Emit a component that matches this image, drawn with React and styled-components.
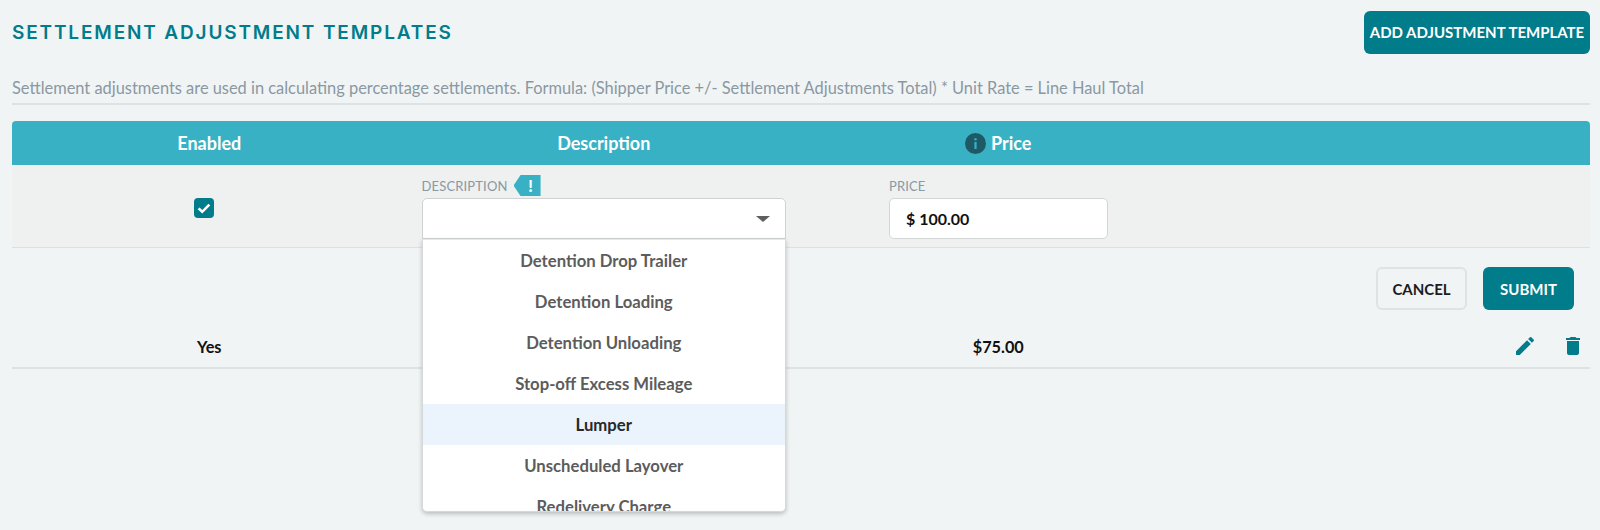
import React from 'react';
import styled, { createGlobalStyle } from 'styled-components';
import { MdEdit, MdDelete } from 'react-icons/md';

const GlobalStyle = createGlobalStyle`
    html, body {
        margin: 0;
        background: #f0f4f5;
        font-family: "Lato", "Liberation Sans", sans-serif;
    }
`;

const Page = styled.div`
    box-sizing: border-box;
    width: 1600px;
    height: 530px;
    overflow: hidden;
    padding: 10px 10px 0 12px;
`;

const TitleRow = styled.div`
    display: flex;
    justify-content: space-between;
    align-items: center;
    height: 44px;
`;

const Title = styled.h1`
    margin: 0;
    font-family: "Inter", "Liberation Sans", sans-serif;
    font-size: 19px;
    font-weight: 600;
    letter-spacing: 1.85px;
    color: #007c8a;
`;

const Button = styled.button`
    box-sizing: border-box;
    height: 43px;
    border-radius: 6px;
    font-family: "Lato", "Liberation Sans", sans-serif;
    font-size: 15px;
    font-weight: 700;
    cursor: pointer;
    border: ${(p) => (p.$ghost ? '2px solid #dfe3e4' : '0')};
    background: ${(p) => (p.$ghost ? '#f0f4f5' : '#007c8a')};
    color: ${(p) => (p.$ghost ? '#1c1c1c' : '#fff')};
    width: ${(p) => p.$width || 91}px;
    padding: 0;
`;

const Intro = styled.p`
    margin: 22px 0 0;
    height: 27px;
    font-size: 16.4px;
    line-height: 24px;
    color: #8a98a2;
    border-bottom: 2px solid #dde2e4;
`;

const Table = styled.div`
    margin-top: 16px;
`;

const Columns = styled.div`
    display: grid;
    grid-template-columns: repeat(4, 1fr);
`;

const HeadRow = styled(Columns)`
    height: 44px;
    align-items: center;
    background: #38b1c4;
    border-radius: 4px 4px 0 0;
`;

const HeadCell = styled.div`
    display: flex;
    justify-content: center;
    align-items: center;
    gap: 5px;
    font-size: 18px;
    font-weight: 700;
    color: #fff;
`;

const FormRow = styled(Columns)`
    height: 83px;
    box-sizing: border-box;
    background: #eff0f0;
    border-bottom: 1px solid #dde0e1;
`;

const CheckCell = styled.div`
    display: flex;
    justify-content: center;
    padding: 33px 10px 0 0;
`;

const CheckBox = styled.span`
    display: flex;
    align-items: center;
    justify-content: center;
    width: 20px;
    height: 20px;
    border-radius: 4px;
    background: #007c8a;
`;

const FieldCell = styled.div`
    padding: 0 ${(p) => p.$inset}px;
`;

const LabelRow = styled.div`
    display: flex;
    align-items: center;
    gap: 6px;
    height: 33px;
    padding-top: 8px;
    box-sizing: border-box;
`;

const FieldLabel = styled.label`
    font-size: 13px;
    color: #8a98a2;
    letter-spacing: 0.15px;
`;

const Tag = styled.span`
    display: flex;
    align-items: center;
    justify-content: center;
    box-sizing: border-box;
    width: 27px;
    height: 21px;
    padding-left: 7px;
    background: #38b1c4;
    clip-path: polygon(0 50%, 7px 0, 100% 0, 100% 100%, 7px 100%);
    color: #fff;
    font-size: 16px;
    font-weight: 900;
`;

const SelectWrap = styled.div`
    position: relative;
`;

const SelectControl = styled.div`
    box-sizing: border-box;
    display: flex;
    justify-content: flex-end;
    align-items: center;
    height: 41px;
    padding-right: 15px;
    background: #fff;
    border: 1px solid #cfd2d3;
    border-radius: 5px 5px 0 0;
`;

const Caret = styled.span`
    width: 0;
    height: 0;
    border-left: 7px solid transparent;
    border-right: 7px solid transparent;
    border-top: 6px solid #5f5f5f;
`;

const Menu = styled.ul`
    position: absolute;
    top: 41px;
    left: 0;
    right: 0;
    z-index: 2;
    box-sizing: border-box;
    height: 273px;
    margin: 0;
    padding: 0;
    overflow: hidden;
    list-style: none;
    background: #fff;
    border: 1px solid #d6d9da;
    border-top-color: #e6e8e9;
    border-radius: 0 0 5px 5px;
    box-shadow: 0 2px 4px rgba(0, 0, 0, 0.22);
`;

const MenuItem = styled.li`
    height: 41px;
    line-height: 43px;
    text-align: center;
    font-size: 16.7px;
    font-weight: 700;
    color: ${(p) => (p.$active ? '#26282b' : '#5c5c5c')};
    background: ${(p) => (p.$active ? '#ebf4fd' : 'transparent')};
`;

const PriceInput = styled.input`
    box-sizing: border-box;
    width: 100%;
    height: 41px;
    padding: 0 16px;
    background: #fff;
    border: 1px solid #d3d6d7;
    border-radius: 5px;
    font-family: "Lato", "Liberation Sans", sans-serif;
    font-size: 16px;
    font-weight: 700;
    color: #111;
    outline: none;
`;

const ActionBar = styled.div`
    display: flex;
    justify-content: flex-end;
    gap: 16px;
    padding: 19px 16px 0 0;
`;

const DataRow = styled(Columns)`
    box-sizing: border-box;
    height: 44px;
    margin-top: 15px;
    align-items: center;
    border-bottom: 2px solid #dde2e4;
`;

const DataCell = styled.div`
    text-align: center;
    font-size: 16.3px;
    font-weight: 700;
    color: #111;
`;

const IconCell = styled.div`
    display: flex;
    justify-content: flex-end;
    align-items: center;
    gap: 24px;
    padding-right: 5px;
    font-size: 24px;
    color: #007c8a;
`;

const items = [
    'Detention Drop Trailer',
    'Detention Loading',
    'Detention Unloading',
    'Stop-off Excess Mileage',
    'Lumper',
    'Unscheduled Layover',
    'Redelivery Charge',
];

const InfoIcon = () => (
    <svg width="21" height="21" viewBox="0 0 21 21">
        <circle cx="10.5" cy="10.5" r="10.5" fill="#1d5a66" />
        <rect x="9.4" y="9" width="2.2" height="7" fill="#38b1c4" />
        <rect x="9.4" y="5.2" width="2.2" height="2.2" fill="#38b1c4" />
    </svg>
);

const CheckIcon = () => (
    <svg width="16" height="16" viewBox="0 0 16 16">
        <path d="M2.6 8.4 6.2 11.8 13.4 4.6" fill="none" stroke="#fff" strokeWidth="2.6" />
    </svg>
);

const App = () => {
    return (
        <Page>
            <GlobalStyle />
            <TitleRow>
                <Title>SETTLEMENT ADJUSTMENT TEMPLATES</Title>
                <Button $width={226}>ADD ADJUSTMENT TEMPLATE</Button>
            </TitleRow>
            <Intro>
                Settlement adjustments are used in calculating percentage settlements. Formula: (Shipper Price +/- Settlement Adjustments Total) * Unit Rate = Line Haul Total
            </Intro>
            <Table>
                <HeadRow>
                    <HeadCell>Enabled</HeadCell>
                    <HeadCell>Description</HeadCell>
                    <HeadCell><InfoIcon />Price</HeadCell>
                    <HeadCell />
                </HeadRow>
                <FormRow>
                    <CheckCell>
                        <CheckBox><CheckIcon /></CheckBox>
                    </CheckCell>
                    <FieldCell $inset={15}>
                        <LabelRow>
                            <FieldLabel>DESCRIPTION</FieldLabel>
                            <Tag>!</Tag>
                        </LabelRow>
                        <SelectWrap>
                            <SelectControl><Caret /></SelectControl>
                            <Menu>
                                {items.map((item) => (
                                    <MenuItem key={item} $active={item === 'Lumper'}>{item}</MenuItem>
                                ))}
                            </Menu>
                        </SelectWrap>
                    </FieldCell>
                    <FieldCell $inset={88}>
                        <LabelRow>
                            <FieldLabel>PRICE</FieldLabel>
                        </LabelRow>
                        <PriceInput defaultValue="$ 100.00" />
                    </FieldCell>
                    <div />
                </FormRow>
                <ActionBar>
                    <Button $ghost>CANCEL</Button>
                    <Button>SUBMIT</Button>
                </ActionBar>
                <DataRow>
                    <DataCell>Yes</DataCell>
                    <DataCell />
                    <DataCell>$75.00</DataCell>
                    <IconCell>
                        <MdEdit />
                        <MdDelete />
                    </IconCell>
                </DataRow>
            </Table>
        </Page>
    );
};

export default App;
